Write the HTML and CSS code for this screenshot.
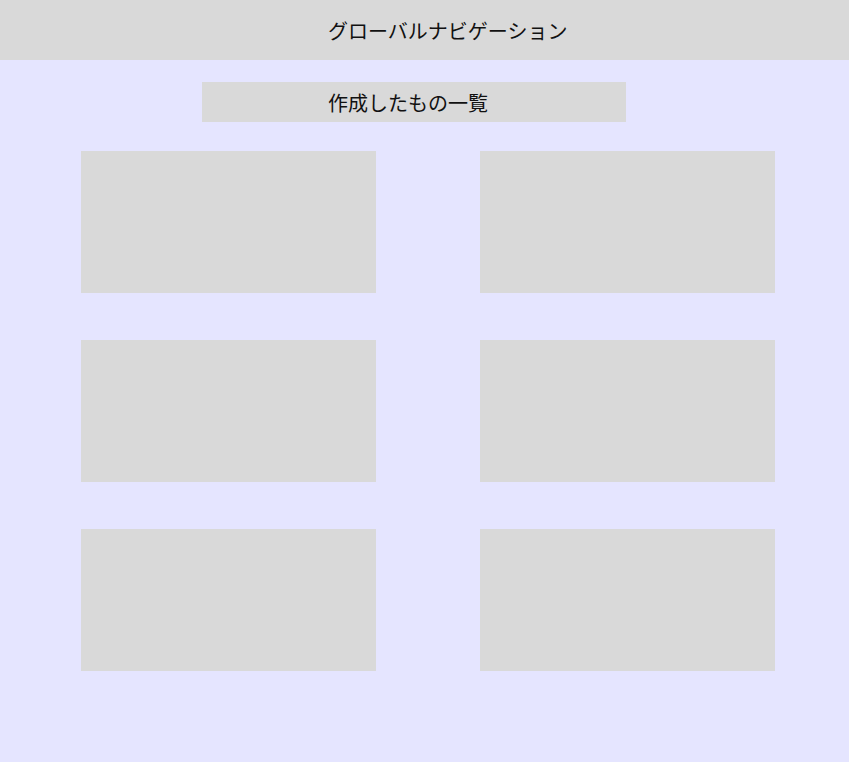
FILE: index.html
```html
<!DOCTYPE html>
<html lang="ja">
<head>
<meta charset="utf-8">
<title>作成したもの一覧</title>
<link rel="stylesheet" href="styles.css">
</head>
<body>
<header class="global-nav">
  <span class="global-nav__label">グローバルナビゲーション</span>
</header>
<main class="content">
  <h1 class="page-title">作成したもの一覧</h1>
  <div class="works">
    <div class="work-card"></div>
    <div class="work-card"></div>
    <div class="work-card"></div>
    <div class="work-card"></div>
    <div class="work-card"></div>
    <div class="work-card"></div>
  </div>
</main>
</body>
</html>
```
FILE: styles.css
```css
html, body {
  margin: 0;
  padding: 0;
}
body {
  width: 849px;
  min-height: 762px;
  background: #e5e5ff;
  font-family: "Noto Sans CJK JP", "Noto Sans", sans-serif;
  color: #111;
}
.global-nav {
  height: 60px;
  background: #d9d9d9;
  display: flex;
  align-items: center;
  padding-left: 328px;
  box-sizing: border-box;
}
.global-nav__label {
  font-size: 20px;
  line-height: 24px;
  padding-top: 2px;
}
.content {
  padding-top: 22px;
  padding-bottom: 91px;
}
.page-title {
  margin: 0 0 0 202px;
  width: 424px;
  height: 40px;
  box-sizing: border-box;
  background: #d9d9d9;
  display: flex;
  align-items: center;
  padding-left: 126px;
  padding-top: 2px;
  font-size: 20px;
  font-weight: normal;
  line-height: 24px;
}
.works {
  margin: 29px 0 0 81px;
  display: grid;
  grid-template-columns: 295px 295px;
  grid-auto-rows: 142px;
  column-gap: 104px;
  row-gap: 47px;
}
.work-card {
  background: #d9d9d9;
}
```
